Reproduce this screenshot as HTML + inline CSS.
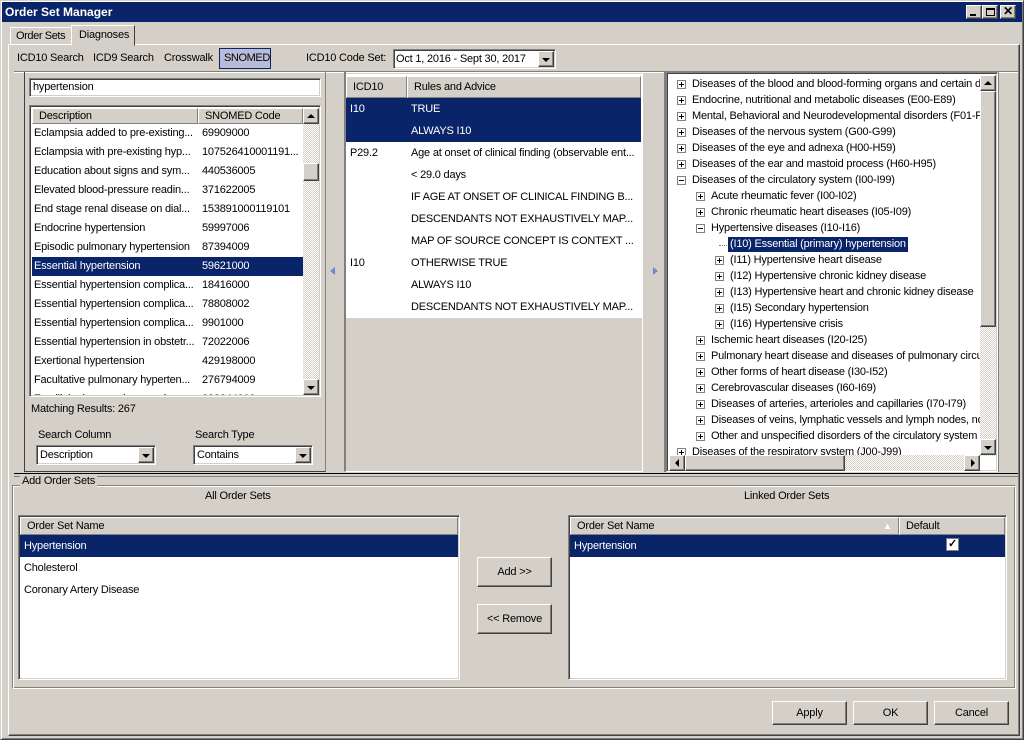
<!DOCTYPE html>
<html><head><style>
*{box-sizing:border-box;margin:0;padding:0}
body{width:1024px;height:740px;background:#d4d0c8;font-family:"Liberation Sans",sans-serif;font-size:11px;letter-spacing:-0.2px;color:#000;position:relative;overflow:hidden}
.a{position:absolute;white-space:nowrap}
.sunk{position:absolute;border:1px solid;border-color:#808080 #fff #fff #808080;box-shadow:inset 1px 1px 0 #404040,inset -1px -1px 0 #d4d0c8}
.rais{position:absolute;background:#d4d0c8;border:1px solid;border-color:#fff #404040 #404040 #fff;box-shadow:inset -1px -1px 0 #808080}
.white{background:#fff}
.sel{background:#0a246a;color:#fff}
.hdr{position:absolute;background:#d4d0c8;border:1px solid;border-color:#fff #808080 #808080 #fff;padding-left:6px;line-height:15px}
.tri{position:absolute;width:0;height:0}
.pb{position:absolute;width:9px;height:9px;border:1px solid #808080;background:#fff}
.pb:before{content:"";position:absolute;left:1px;top:3px;width:5px;height:1px;background:#000}
.pb.p:after{content:"";position:absolute;left:3px;top:1px;width:1px;height:5px;background:#000}
.chk{background:repeating-conic-gradient(#fff 0 25%,#d4d0c8 0 50%) 0 0/2px 2px}
.clip{overflow:hidden}
</style></head><body>
<div class="a" style="left:0;top:0;width:1024px;height:740px;border:1px solid;border-color:#d4d0c8 #404040 #404040 #d4d0c8;box-shadow:inset 1px 1px 0 #fff,inset -1px -1px 0 #808080"></div>
<div class="a" style="left:2px;top:2px;width:1020px;height:20px;background:#0a246a;color:#fff;font-weight:bold;font-size:12px;letter-spacing:0;line-height:20px;padding-left:3px">Order Set Manager</div>
<div class="rais" style="left:966px;top:5px;width:16px;height:14px"><div class="a" style="left:3px;top:8px;width:6px;height:2px;background:#000"></div></div>
<div class="rais" style="left:982px;top:5px;width:16px;height:14px"><div class="a" style="left:3px;top:2px;width:9px;height:8px;border:1px solid #000;border-top-width:2px"></div></div>
<div class="rais" style="left:1000px;top:5px;width:16px;height:14px;text-align:center;font-weight:bold;line-height:11px;font-size:12px">✕</div>

<div class="a" style="left:8px;top:44px;width:1012px;height:692px;border:1px solid;border-color:#fff #404040 #404040 #fff;box-shadow:inset -1px -1px 0 #808080"></div>
<div class="a" style="left:10px;top:27px;width:62px;height:18px;border:1px solid;border-color:#fff #404040 transparent #fff;line-height:17px;padding-left:5px;letter-spacing:-0.4px">Order Sets</div>
<div class="a" style="left:71px;top:25px;width:64px;height:21px;background:#d4d0c8;border:1px solid;border-color:#fff #404040 transparent #fff;line-height:18px;padding-left:7px">Diagnoses</div>

<div class="a" style="left:17px;top:52px">ICD10 Search</div>
<div class="a" style="left:93px;top:52px">ICD9 Search</div>
<div class="a" style="left:164px;top:52px">Crosswalk</div>
<div class="a" style="left:219px;top:48px;width:52px;height:21px;background:#b9bcd8;border:1px solid #0a246a;line-height:19px;padding-left:4px;letter-spacing:-0.4px">SNOMED</div>
<div class="a" style="left:306px;top:52px">ICD10 Code Set:</div>
<div class="sunk white" style="left:393px;top:49px;width:163px;height:20px"><div class="a" style="left:2px;top:3px">Oct 1, 2016 - Sept 30, 2017</div>
<div class="rais" style="left:144px;top:1px;width:16px;height:16px"><div class="tri" style="left:3px;top:6px;border-left:4px solid transparent;border-right:4px solid transparent;border-top:4px solid #000"></div></div></div>
<div class="a" style="left:14px;top:71px;width:1004px;height:1px;background:#808080"></div>
<div class="a" style="left:14px;top:72px;width:1004px;height:1px;background:#fff"></div>

<div class="a" style="left:24px;top:72px;width:302px;height:400px;border-left:1px solid #404040;border-bottom:1px solid #404040;border-right:1px solid #808080"></div>
<div class="sunk white" style="left:29px;top:78px;width:292px;height:19px"><div class="a" style="left:3px;top:2px">hypertension</div></div>
<div class="sunk white" style="left:29px;top:105px;width:292px;height:292px;overflow:hidden">
<div class="hdr" style="left:2px;top:2px;width:166px;height:16px">Description</div>
<div class="hdr" style="left:168px;top:2px;width:105px;height:16px">SNOMED Code</div>
<div class="a clip" style="left:0;top:0;width:273px;height:289px"><div id="lrows"></div></div>
<div class="a chk" style="left:273px;top:2px;width:16px;height:287px"></div>
<div class="rais" style="left:273px;top:2px;width:16px;height:16px"><div class="tri" style="left:3px;top:5px;border-left:4px solid transparent;border-right:4px solid transparent;border-bottom:4px solid #000"></div></div>
<div class="rais" style="left:273px;top:57px;width:16px;height:18px"></div>
<div class="rais" style="left:273px;top:273px;width:16px;height:16px"><div class="tri" style="left:3px;top:6px;border-left:4px solid transparent;border-right:4px solid transparent;border-top:4px solid #000"></div></div>
</div>
<div class="a" style="left:31px;top:403px">Matching Results: 267</div>
<div class="a" style="left:38px;top:429px">Search Column</div>
<div class="a" style="left:195px;top:429px">Search Type</div>
<div class="sunk white" style="left:36px;top:445px;width:120px;height:20px"><div class="a" style="left:3px;top:3px">Description</div><div class="rais" style="left:101px;top:1px;width:16px;height:16px"><div class="tri" style="left:3px;top:6px;border-left:4px solid transparent;border-right:4px solid transparent;border-top:4px solid #000"></div></div></div>
<div class="sunk white" style="left:193px;top:445px;width:120px;height:20px"><div class="a" style="left:3px;top:3px">Contains</div><div class="rais" style="left:101px;top:1px;width:16px;height:16px"><div class="tri" style="left:3px;top:6px;border-left:4px solid transparent;border-right:4px solid transparent;border-top:4px solid #000"></div></div></div>

<div class="tri" style="left:330px;top:267px;border-top:4px solid transparent;border-bottom:4px solid transparent;border-right:5px solid #6d8ad0"></div>
<div class="tri" style="left:653px;top:267px;border-top:4px solid transparent;border-bottom:4px solid transparent;border-left:5px solid #6d8ad0"></div>

<div class="a" style="left:344px;top:72px;width:299px;height:400px;border-left:2px solid #808080;border-bottom:1px solid #fff;border-right:1px solid #fff"></div>
<div class="a" style="left:346px;top:74px;width:296px;height:244px;background:#fff"></div>
<div class="hdr" style="left:346px;top:76px;width:61px;height:22px;line-height:20px">ICD10</div>
<div class="hdr" style="left:407px;top:76px;width:234px;height:22px;line-height:20px">Rules and Advice</div>
<div class="a sel" style="left:346px;top:98px;width:295px;height:44px"></div>
<div class="a clip" style="left:346px;top:98px;width:295px;height:220px"><div id="mrows"></div></div>

<div class="a" style="left:664px;top:72px;width:2px;height:400px;background:#808080"></div>
<div class="sunk white" style="left:666px;top:72px;width:332px;height:400px;overflow:hidden">
<div class="a clip" style="left:0;top:0;width:313px;height:382px"><div id="tree"></div></div>
<div class="a chk" style="left:313px;top:2px;width:16px;height:381px"></div>
<div class="rais" style="left:313px;top:2px;width:16px;height:16px"><div class="tri" style="left:3px;top:5px;border-left:4px solid transparent;border-right:4px solid transparent;border-bottom:4px solid #000"></div></div>
<div class="rais" style="left:313px;top:18px;width:16px;height:236px"></div>
<div class="rais" style="left:313px;top:366px;width:16px;height:16px"><div class="tri" style="left:3px;top:6px;border-left:4px solid transparent;border-right:4px solid transparent;border-top:4px solid #000"></div></div>
<div class="a chk" style="left:2px;top:382px;width:311px;height:16px"></div>
<div class="rais" style="left:2px;top:382px;width:16px;height:16px"><div class="tri" style="left:5px;top:3px;border-top:4px solid transparent;border-bottom:4px solid transparent;border-right:4px solid #000"></div></div>
<div class="rais" style="left:18px;top:382px;width:160px;height:16px"></div>
<div class="rais" style="left:297px;top:382px;width:16px;height:16px"><div class="tri" style="left:6px;top:3px;border-top:4px solid transparent;border-bottom:4px solid transparent;border-left:4px solid #000"></div></div>
</div>
<div class="a" style="left:998px;top:72px;width:1px;height:400px;background:#808080"></div>
<div class="a" style="left:14px;top:473px;width:1004px;height:1px;background:#000"></div>
<div class="a" style="left:14px;top:476px;width:1004px;height:1px;background:#808080"></div>

<div class="a" style="left:12px;top:485px;width:1004px;height:204px;border:1px solid;border-color:#808080 #fff #fff #808080;box-shadow:inset 1px 1px 0 #fff,inset -1px -1px 0 #808080"></div>
<div class="a" style="left:20px;top:475px;background:#d4d0c8;padding:0 2px">Add Order Sets</div>
<div class="a" style="left:205px;top:490px">All Order Sets</div>
<div class="a" style="left:744px;top:490px">Linked Order Sets</div>
<div class="sunk white" style="left:18px;top:515px;width:442px;height:165px">
<div class="hdr" style="left:1px;top:1px;width:438px;height:18px;line-height:16px">Order Set Name</div>
<div class="a sel" style="left:1px;top:19px;width:438px;height:22px;line-height:22px;padding-left:4px">Hypertension</div>
<div class="a" style="left:5px;top:46px">Cholesterol</div>
<div class="a" style="left:5px;top:68px">Coronary Artery Disease</div>
</div>
<div class="rais" style="left:477px;top:557px;width:75px;height:30px;text-align:center;line-height:28px">Add &gt;&gt;</div>
<div class="rais" style="left:477px;top:604px;width:75px;height:30px;text-align:center;line-height:28px">&lt;&lt; Remove</div>
<div class="sunk white" style="left:568px;top:515px;width:439px;height:165px">
<div class="hdr" style="left:1px;top:1px;width:329px;height:18px;line-height:16px">Order Set Name<span class="a" style="left:312px;top:0;color:#fff;font-size:9px">▲</span></div>
<div class="hdr" style="left:330px;top:1px;width:106px;height:18px;line-height:16px">Default</div>
<div class="a sel" style="left:1px;top:19px;width:435px;height:22px;line-height:22px;padding-left:4px">Hypertension</div>
<div class="a" style="left:377px;top:22px;width:13px;height:13px;background:#fff;border:1px solid #808080;color:#000;font-size:11px;line-height:11px;text-align:center;font-weight:bold">✓</div>
</div>
<div class="rais" style="left:772px;top:701px;width:75px;height:24px;text-align:center;line-height:22px">Apply</div>
<div class="rais" style="left:853px;top:701px;width:75px;height:24px;text-align:center;line-height:22px">OK</div>
<div class="rais" style="left:934px;top:701px;width:75px;height:24px;text-align:center;line-height:22px">Cancel</div>

<script>
var L=[["Eclampsia added to pre-existing...","69909000"],["Eclampsia with pre-existing hyp...","107526410001191..."],["Education about signs and sym...","440536005"],["Elevated blood-pressure readin...","371622005"],["End stage renal disease on dial...","153891000119101"],["Endocrine hypertension","59997006"],["Episodic pulmonary hypertension","87394009"],["Essential hypertension","59621000"],["Essential hypertension complica...","18416000"],["Essential hypertension complica...","78808002"],["Essential hypertension complica...","9901000"],["Essential hypertension in obstetr...","72022006"],["Exertional hypertension","429198000"],["Facultative pulmonary hyperten...","276794009"],["Familial primary pulmonary h...","333344000"]];
var h="";L.forEach(function(r,i){var t=18+i*19;h+='<div class="a'+(i==7?' sel':'')+'" style="left:2px;top:'+t+'px;width:271px;height:19px;line-height:19px;overflow:hidden"><span class="a" style="left:2px;width:165px;overflow:hidden">'+r[0]+'</span><span class="a" style="left:170px">'+r[1]+'</span></div>';});
document.getElementById('lrows').innerHTML=h;
var M=[["I10","TRUE"],["","ALWAYS I10"],["P29.2","Age at onset of clinical finding (observable ent..."],["","&lt; 29.0 days"],["","IF AGE AT ONSET OF CLINICAL FINDING B..."],["","DESCENDANTS NOT EXHAUSTIVELY MAP..."],["","MAP OF SOURCE CONCEPT IS CONTEXT ..."],["I10","OTHERWISE TRUE"],["","ALWAYS I10"],["","DESCENDANTS NOT EXHAUSTIVELY MAP..."]];
h="";M.forEach(function(r,i){var t=5+i*22,c=i<2?'color:#fff;':'';h+='<div class="a" style="'+c+'left:4px;top:'+t+'px">'+r[0]+'</div><div class="a" style="'+c+'left:65px;top:'+t+'px">'+r[1]+'</div>';});
document.getElementById('mrows').innerHTML=h;
var T=[[0,"p","Diseases of the blood and blood-forming organs and certain disorders"],[0,"p","Endocrine, nutritional and metabolic diseases (E00-E89)"],[0,"p","Mental, Behavioral and Neurodevelopmental disorders (F01-F99)"],[0,"p","Diseases of the nervous system (G00-G99)"],[0,"p","Diseases of the eye and adnexa (H00-H59)"],[0,"p","Diseases of the ear and mastoid process (H60-H95)"],[0,"m","Diseases of the circulatory system (I00-I99)"],[1,"p","Acute rheumatic fever (I00-I02)"],[1,"p","Chronic rheumatic heart diseases (I05-I09)"],[1,"m","Hypertensive diseases (I10-I16)"],[2,"","(I10) Essential (primary) hypertension"],[2,"p","(I11) Hypertensive heart disease"],[2,"p","(I12) Hypertensive chronic kidney disease"],[2,"p","(I13) Hypertensive heart and chronic kidney disease"],[2,"p","(I15) Secondary hypertension"],[2,"p","(I16) Hypertensive crisis"],[1,"p","Ischemic heart diseases (I20-I25)"],[1,"p","Pulmonary heart disease and diseases of pulmonary circulation"],[1,"p","Other forms of heart disease (I30-I52)"],[1,"p","Cerebrovascular diseases (I60-I69)"],[1,"p","Diseases of arteries, arterioles and capillaries (I70-I79)"],[1,"p","Diseases of veins, lymphatic vessels and lymph nodes, not elsewhere"],[1,"p","Other and unspecified disorders of the circulatory system"],[0,"p","Diseases of the respiratory system (J00-J99)"]];
h="";T.forEach(function(r,i){var t=4+i*16,bx=10+r[0]*19,tx=24+r[0]*19;
if(r[1])h+='<div class="pb'+(r[1]=="p"?" p":"")+'" style="left:'+bx+'px;top:'+(t+3)+'px"></div>';
else h+='<div class="a" style="left:'+(bx+4)+'px;top:'+(t+8)+'px;width:8px;border-top:1px dotted #808080"></div>';
h+='<div class="a'+(i==10?' sel':'')+'" style="left:'+(tx-1)+'px;top:'+t+'px;height:15px;line-height:15px;padding:0 2px">'+r[2]+'</div>';});
document.getElementById('tree').innerHTML=h;
</script>
</body></html>
